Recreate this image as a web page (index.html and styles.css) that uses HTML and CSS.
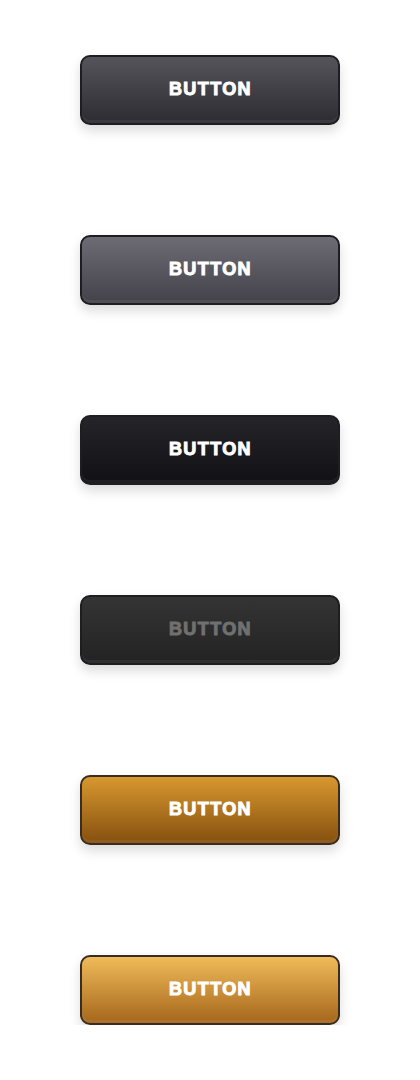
FILE: index.html
```html
<!DOCTYPE html>
<html lang="en">
<head>
  <meta charset="UTF-8">
  <meta name="viewport" content="width=device-width, initial-scale=1">
  <title>Buttons</title>
  <link rel="stylesheet" href="styles.css">
</head>
<body>

<div class="button-list">
  <button class="btn btn-default">BUTTON</button>
  <button class="btn btn-light">BUTTON</button>
  <button class="btn btn-dark">BUTTON</button>
  <button class="btn btn-disabled" disabled>BUTTON</button>
  <button class="btn btn-amber">BUTTON</button>
  <button class="btn btn-gold">BUTTON</button>
</div>

</body>
</html>
```

FILE: styles.css
```css
body {
  margin: 0;
  background-color: #fff;
  font-family: "Liberation Sans", Arial, sans-serif;
}

.button-list {
  display: flex;
  flex-direction: column;
  align-items: center;
  gap: 110px;
  padding-top: 55px;
}

.btn {
  width: 260px;
  height: 70px;
  border: 2px solid #1e1d21;
  border-radius: 10px;
  color: #fff;
  font-family: "Liberation Sans", Arial, sans-serif;
  font-size: 18px;
  font-weight: bold;
  letter-spacing: 1.4px;
  -webkit-text-stroke: 1px currentColor;
  padding: 0 0 2px 1px;
  cursor: pointer;
  box-shadow: inset 0 -3px 0 rgba(255, 255, 255, 0.06), 0 6px 12px rgba(0, 0, 0, 0.14);
}

.btn-default {
  background: linear-gradient(to bottom, #55545a, #2d2c32);
}

.btn-light {
  background: linear-gradient(to bottom, #6d6c74, #43424a);
}

.btn-dark {
  background: linear-gradient(to bottom, #252429, #111014);
}

.btn-disabled {
  background: linear-gradient(to bottom, #343434, #232323);
  color: #707070;
  cursor: default;
}

.btn-amber {
  background: linear-gradient(to bottom, #d8982f, #85500f);
  border-color: #3a2d20;
}

.btn-gold {
  background: linear-gradient(to bottom, #f0bb5a, #a5661b);
  border-color: #3a2d20;
}
```
